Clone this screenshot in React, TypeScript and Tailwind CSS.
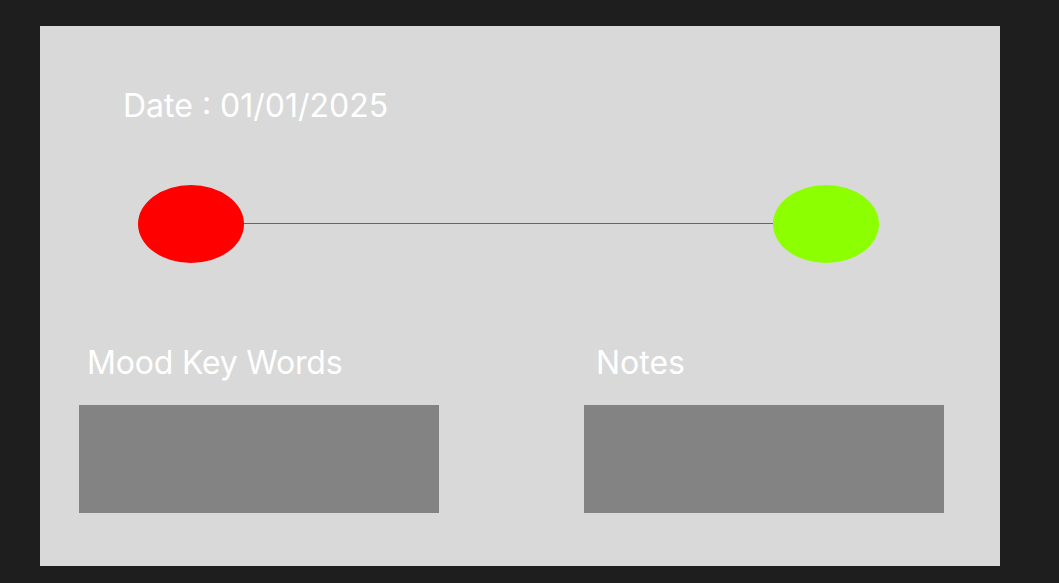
import React from "react";

export default function App() {
  return (
    <div className="w-[1059px] h-[583px] bg-[#1e1e1e] pt-[26px] pl-[40px] font-['Inter',sans-serif]">
      <div className="w-[960px] h-[540px] bg-[#d9d9d9] flex flex-col">
        <p className="ml-[83px] mt-[62px] text-[32px] leading-[36px] text-white">Date : 01/01/2025</p>
        <div className="ml-[98px] mr-[121px] mt-[61px] flex items-start">
          <div className="w-[106px] h-[78px] rounded-[50%] bg-[#ff0000]" />
          <div className="flex-1 mt-[38px] h-px bg-[#666666]" />
          <div className="w-[106px] h-[78px] rounded-[50%] bg-[#8cff00]" />
        </div>
        <div className="ml-[39px] mt-[82px] flex gap-[145px]">
          <div className="w-[360px] flex flex-col">
            <p className="ml-[8px] text-[32px] leading-[36px] tracking-[-0.2px] text-white">Mood Key Words</p>
            <div className="mt-[24px] h-[108px] bg-[#838383]" />
          </div>
          <div className="w-[360px] flex flex-col">
            <p className="ml-[12px] text-[32px] leading-[36px] text-white">Notes</p>
            <div className="mt-[24px] h-[108px] bg-[#838383]" />
          </div>
        </div>
      </div>
    </div>
  );
}
